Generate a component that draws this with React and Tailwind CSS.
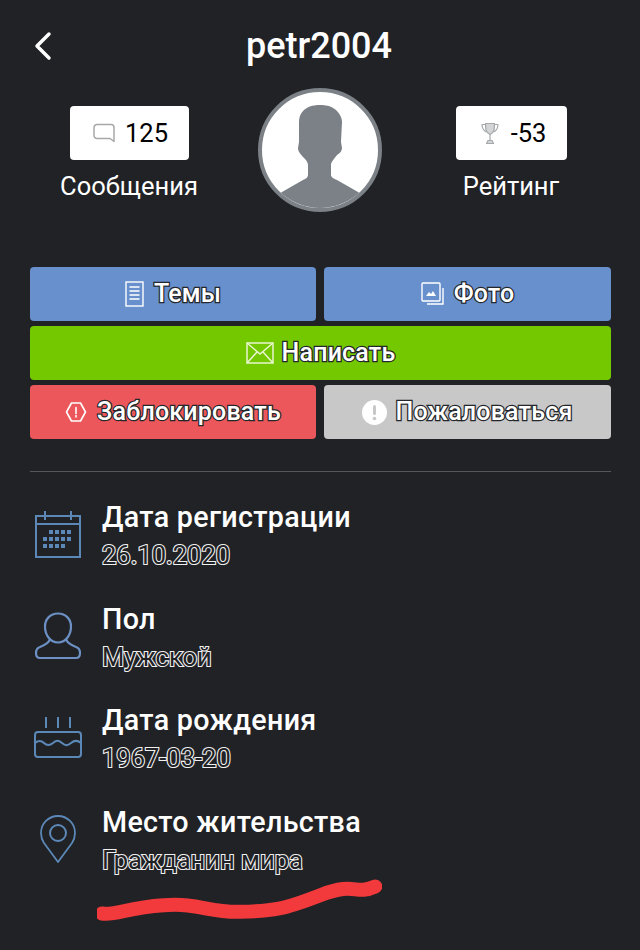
const outlineDark = '[-webkit-text-stroke:2.5px_#23262a] [paint-order:stroke_fill]';
const outlineValue = '[-webkit-text-stroke:2.2px_#f0f0f0] [paint-order:stroke_fill]';

const CommentIcon = () => (
    <svg width="22" height="20" viewBox="0 0 22 20" fill="none" stroke="#a6a9ab" strokeWidth="1.5" strokeLinejoin="round">
        <path d="M4 1.500h14a3 3 0 0 1 3 3v14l-4-3H4a3 3 0 0 1-3-3v-8a3 3 0 0 1 3-3z" />
    </svg>
);

const TrophyIcon = () => (
    <svg width="18" height="23" viewBox="0 0 18 23" fill="none" stroke="#a6a9ab" strokeWidth="1.200" strokeLinejoin="round">
        <path d="M4.500 1.500h9c0 5 0 9-4.500 11-4.500-2-4.500-6-4.500-11z" fill="#d4d5d6" />
        <path d="M4.500 2.500H1c0 3.500 1.500 6 4.500 7.500M13.500 2.500H17c0 3.500-1.500 6-4.500 7.500" />
        <path d="M9 12.500v6M5.500 21.500h7l-1.500-3H7z" fill="#d4d5d6" />
    </svg>
);

const Avatar = () => (
    <div className="w-[124px] h-[124px] rounded-full border-[4px] border-[#7b8186] bg-white overflow-hidden">
        <svg width="116" height="116" viewBox="0 0 116 116" fill="#7b8186">
            <path d="M58 13C50 13 45 15 41 19 38 22 37 26 37 30V50L36 56C36 60 39 62 41 65 44 68 46 70 46 73V83C46 85 44 87 41 88L20 100 0 116H116L96 100 75 88C72 87 69 85 69 83V73C69 70 72 67 75 63 78 61 80 59 80 56L79 50 80 30C80 26 78 22 75 19 71 15 66 13 58 13Z" />
        </svg>
    </div>
);

const DocIcon = () => (
    <svg width="19" height="26" viewBox="0 0 19 26" fill="none" stroke="#fff" strokeWidth="1.4">
        <rect x="1" y="1" width="17" height="24" />
        <path d="M4.500 6h10M4.500 10h10M4.500 14h10M4.500 18h10" />
    </svg>
);

const PhotoIcon = () => (
    <svg width="23" height="24" viewBox="0 0 23 24" fill="none" stroke="#fff" strokeWidth="1.4">
        <rect x="1" y="1" width="18" height="18" rx="1" />
        <path d="M22 6v16H6" />
        <path d="M5 14l3-4 2 2 2-3 3 5z" fill="#fff" stroke="none" />
    </svg>
);

const MailIcon = () => (
    <svg width="28" height="24" viewBox="0 0 28 24" fill="none" stroke="#e8f5d0" strokeWidth="1.5">
        <rect x="1" y="2" width="26" height="20" />
        <path d="M1 2l13 11L27 2M1 22l10-11M27 22L17 11" />
    </svg>
);

const BlockIcon = () => (
    <svg width="22" height="22" viewBox="0 0 22 22" fill="none" stroke="#fff" strokeWidth="1.6" strokeLinejoin="round">
        <path d="M6.500 2h9l5 9-5 9h-9l-5-9z" />
        <path d="M11 6.500v6M11 14.500v1.500" strokeLinecap="round" />
    </svg>
);

const AlertIcon = () => (
    <svg width="25" height="25" viewBox="0 0 25 25">
        <circle cx="12.500" cy="12.500" r="12.500" fill="#fff" />
        <rect x="11" y="5" width="3" height="10" rx="1.500" fill="#c8c8c8" />
        <circle cx="12.500" cy="18.500" r="1.800" fill="#c8c8c8" />
    </svg>
);

const CalendarIcon = () => (
    <svg width="48" height="48" viewBox="0 0 48 48" fill="none" stroke="#5c88b8" strokeWidth="2">
        <rect x="2" y="6" width="44" height="41" />
        <path d="M2 14h44M11 1v9M37 1v9" />
        <g fill="#5c88b8" stroke="none">
            <rect x="15" y="20" width="4" height="4" /><rect x="21" y="20" width="4" height="4" /><rect x="27" y="20" width="4" height="4" /><rect x="33" y="20" width="4" height="4" />
            <rect x="9" y="27" width="4" height="4" /><rect x="15" y="27" width="4" height="4" /><rect x="21" y="27" width="4" height="4" /><rect x="27" y="27" width="4" height="4" /><rect x="33" y="27" width="4" height="4" />
            <rect x="9" y="34" width="4" height="4" /><rect x="15" y="34" width="4" height="4" /><rect x="21" y="34" width="4" height="4" /><rect x="27" y="34" width="4" height="4" />
        </g>
    </svg>
);

const UserIcon = () => (
    <svg width="48" height="48" viewBox="0 0 48 48" fill="none" stroke="#6c90c4" strokeWidth="2.200" strokeLinejoin="round">
        <path d="M24 1.500c8 0 13 6 13 13 0 8-5 16-13 16s-13-8-13-16c0-7 5-13 13-13z" />
        <path d="M16 27c-1 4-5 6-10 8-3 1-4 3-4 6 0 3 1 5 4 5h36c3 0 4-2 4-5 0-3-1-5-4-6-5-2-9-4-10-8" />
    </svg>
);

const CakeIcon = () => (
    <svg width="48" height="41" viewBox="0 0 48 41" fill="none" stroke="#5c88b8" strokeWidth="2">
        <rect x="1" y="15" width="46" height="25" rx="3" />
        <path d="M1 26c3.500-3 6-3 9 0s5.500 3 9 0 5.500-3 9 0 5.500 3 9 0 6.500-3 10 0" />
        <path d="M12 0v11M24 0v11M36 0v11" />
    </svg>
);

const PinIcon = () => (
    <svg width="36" height="48" viewBox="0 0 36 48" fill="none" stroke="#5c88b8" strokeWidth="1.800" strokeLinejoin="round">
        <path d="M18 1c9.500 0 17 7.500 17 17 0 4-1 7-3 10L18 47 4 28c-2-3-3-6-3-10C1 8.500 8.500 1 18 1z" />
        <circle cx="18" cy="18" r="8" strokeWidth="2" />
    </svg>
);

const infoRows = [
    { title: 'Дата регистрации', value: '26.10.2020', icon: <CalendarIcon /> },
    { title: 'Пол', value: 'Мужской', icon: <UserIcon /> },
    { title: 'Дата рождения', value: '1967-03-20', icon: <CakeIcon /> },
    { title: 'Место жительства', value: 'Гражданин мира', icon: <PinIcon /> },
];

const ActionButton = ({ color, icon, label, gap = 'gap-[10px]' }) => (
    <button className={`h-[54px] rounded-[4px] flex items-center justify-center ${gap} ${color}`}>
        {icon}
        <span className={`text-[25px] font-medium text-white tracking-[0.2px] ${outlineDark}`}>{label}</span>
    </button>
);

export default function App() {
    return (
        <div className="w-[640px] h-[950px] overflow-hidden bg-[#212225] text-white font-['Roboto',sans-serif]">
            {/* Header */}
            <div className="grid grid-cols-[1fr_auto_1fr] items-center pt-[23px] pl-[33px] pr-[35px] h-[69px]">
                <svg width="20" height="30" viewBox="0 0 20 30" fill="none" stroke="#fff" strokeWidth="3.500" strokeLinecap="round" strokeLinejoin="round">
                    <path d="M16 3L4 15l12 12" />
                </svg>
                <h1 className="text-[36px] font-medium leading-none">petr2004</h1>
            </div>

            {/* Stats */}
            <div className="grid grid-cols-[1fr_124px_1fr] mt-[19px]">
                <div className="flex flex-col items-center pt-[18px]">
                    <div className="w-[119px] h-[54px] pl-[3px] bg-white rounded-[4px] flex items-center justify-center gap-[10px] text-black">
                        <CommentIcon />
                        <span className="text-[25.5px]">125</span>
                    </div>
                    <span className="text-[25.5px] leading-none mt-[14px]">Сообщения</span>
                </div>
                <Avatar />
                <div className="flex flex-col items-center pt-[18px]">
                    <div className="w-[111px] h-[54px] pl-[5px] bg-white rounded-[4px] flex items-center justify-center gap-[12px] text-black">
                        <TrophyIcon />
                        <span className="text-[25.5px]">-53</span>
                    </div>
                    <span className="text-[25.5px] leading-none mt-[14px]">Рейтинг</span>
                </div>
            </div>

            {/* Buttons */}
            <div className="grid grid-cols-[286px_287px] gap-x-2 gap-y-[5px] pl-[30px] pr-[29px] mt-[55px]">
                <ActionButton color="bg-[#6890cc]" icon={<DocIcon />} label="Темы" />
                <ActionButton color="bg-[#6890cc]" icon={<PhotoIcon />} label="Фото" />
                <div className="col-span-2 grid">
                    <ActionButton color="bg-[#74c800]" icon={<MailIcon />} label="Написать" gap="gap-2" />
                </div>
                <ActionButton color="bg-[#ec575b]" icon={<BlockIcon />} label="Заблокировать" />
                <ActionButton color="bg-[#c8c8c8]" icon={<AlertIcon />} label="Пожаловаться" gap="gap-2" />
            </div>

            <div className="ml-[30px] mr-[29px] mt-[32px] h-px bg-[#55585b]" />

            {/* Info */}
            <div className="mt-[22px] flex flex-col gap-[17.5px]">
                {infoRows.map((row) => (
                    <div key={row.title} className="flex items-center h-[84px]">
                        <div className="w-[102px] flex justify-center pl-[14px] -mt-1 shrink-0">{row.icon}</div>
                        <div>
                            <p className="text-[28.7px] font-medium leading-[38px] tracking-[0.3px]">{row.title}</p>
                            <p className={`text-[25.5px] leading-[38px] text-[#212225] ${outlineValue}`}>{row.value}</p>
                        </div>
                    </div>
                ))}
            </div>

            {/* Red marker line */}
            <svg className="ml-[97px] -mt-[4px]" width="285" height="42" viewBox="290 540 855 125" fill="none" stroke="#f23a3c" strokeWidth="42" strokeLinecap="round" strokeLinejoin="round">
                <path d="M305 643C345 650 380 625 490 618S620 640 720 638 850 630 960 588 1060 590 1125 562" />
            </svg>
        </div>
    );
}
